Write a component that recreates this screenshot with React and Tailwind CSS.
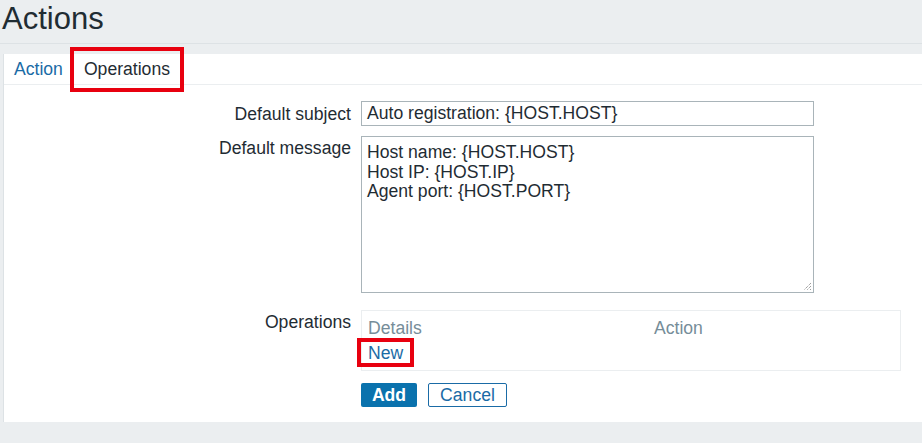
import React from 'react';

const font = { fontFamily: '"Liberation Sans", Arial, sans-serif' };

const Row = ({ label, children, top }) => (
    <>
        <div className={`text-right text-[#1f2c33] leading-[22px] ${top}`}>{label}</div>
        <div>{children}</div>
    </>
);

const App = () => {
    return (
        <div className="min-h-[443px] w-full bg-[#ebeef0] text-[17.6px] text-[#1f2c33]" style={font}>
            {/* Заголовок */}
            <div className="h-[44px] border-b border-[#dde2e5] pl-[2px]">
                <h1 className="text-[31px] leading-[36px] pt-[1px] text-[#1f2c33]">Actions</h1>
            </div>

            <div className="pt-[10px] pl-[3px]">
                <div className="bg-white h-[368px] border-l border-[#dde2e5]">
                    {/* Вкладки */}
                    <div className="h-[31px] border-b border-[#ebeef0] flex items-center pl-[9px]">
                        <span className="text-[#1a6ba6] px-[1px]">Action</span>
                        <span className="relative ml-[20px]">
                            Operations
                            <span className="absolute -left-[14px] -right-[14px] -top-[9px] -bottom-[10px] border-[4px] border-[#e8000f]"></span>
                        </span>
                    </div>

                    {/* Форма */}
                    <div className="grid grid-cols-[347px_1fr] gap-x-[10px] pt-[16px]">
                        <Row label="Default subject" top="self-center">
                            <div className="w-[453px] h-[25px] border border-[#a9b4b9] px-[5px] leading-[23px]">
                                Auto registration: {'{HOST.HOST}'}
                            </div>
                        </Row>
                        <div className="col-span-2 h-[10px]"></div>
                        <Row label="Default message" top="pt-[1px]">
                            <div className="relative w-[453px] h-[157px] border border-[#a9b4b9] px-[5px] pt-[6px] leading-[19.5px]">
                                <div>Host name: {'{HOST.HOST}'}</div>
                                <div>Host IP: {'{HOST.IP}'}</div>
                                <div>Agent port: {'{HOST.PORT}'}</div>
                                <svg className="absolute right-[1px] bottom-[1px]" width="9" height="9" viewBox="0 0 9 9">
                                    <path d="M8 1L1 8M8 4L4 8M8 7L7 8" stroke="#777" strokeWidth="1" strokeDasharray="1 1" />
                                </svg>
                            </div>
                        </Row>
                        <div className="col-span-2 h-[17px]"></div>
                        <Row label="Operations" top="pt-[1px]">
                            <div className="w-[540px] h-[61px] border border-[#ebeef0] pl-[6px] pt-[6px]">
                                <div className="flex text-[#768d99] leading-[22px]">
                                    <span className="w-[286px]">Details</span>
                                    <span>Action</span>
                                </div>
                                <div className="leading-[22px] mt-[3px]">
                                    <span className="relative text-[#1a6ba6]">
                                        New
                                        <span className="absolute -left-[11px] -right-[11px] -top-[5px] -bottom-[4px] border-[4px] border-[#e8000f]"></span>
                                    </span>
                                </div>
                            </div>
                            <div className="flex gap-[11px] mt-[12px]">
                                <button className="w-[56px] h-[24px] bg-[#0a72ad] text-white font-bold leading-[24px] rounded-[2px]">
                                    Add
                                </button>
                                <button className="w-[79px] h-[24px] border border-[#1a6ba6] text-[#1a6ba6] leading-[22px] rounded-[2px]">
                                    Cancel
                                </button>
                            </div>
                        </Row>
                    </div>
                </div>
            </div>
        </div>
    );
};

export default App;
